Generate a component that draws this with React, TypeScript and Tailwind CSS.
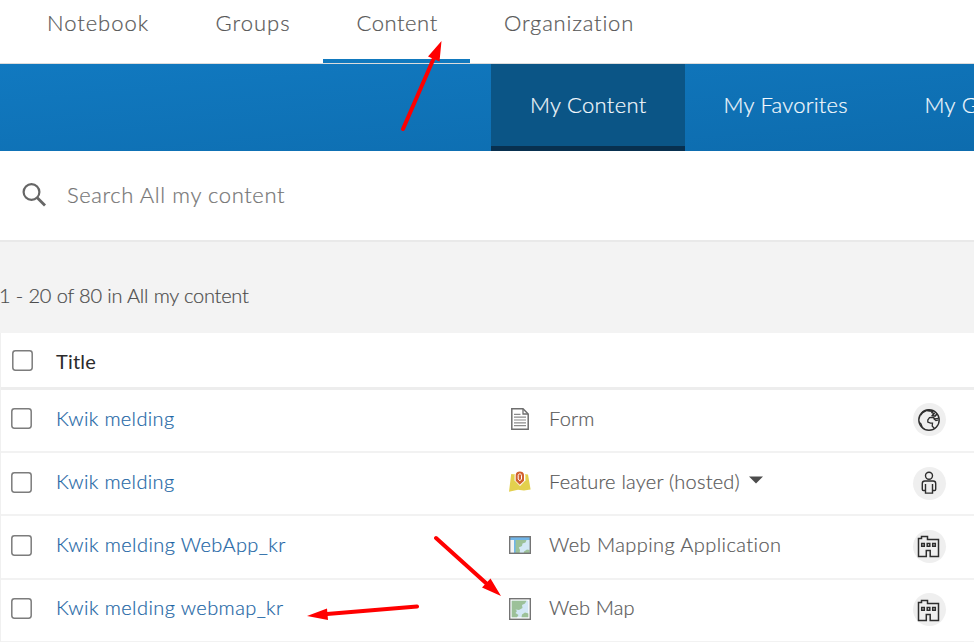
import React from "react";

function FormIcon() {
  return (
    <svg width="24" height="24" viewBox="0 0 24 24" fill="none">
      <path d="M3.8 1.8H15L20.2 7V22.2H3.8Z" fill="#fff" stroke="#6e6e6e" strokeWidth="1.5" />
      <path d="M15 2V7H20" stroke="#6e6e6e" strokeWidth="1.3" />
      <path d="M6 7.3H12.5M6 10.2H18M6 13H18M6 15.8H18M6 18.6H18" stroke="#8a8a8a" strokeWidth="1.2" />
    </svg>
  );
}

function LayerIcon() {
  return (
    <svg width="24" height="24" viewBox="0 0 24 24">
      <path d="M3.2 4L8 4.6L15 4L20 4.4L22.6 19.5L16 20.4L10 19.8L1 21.8Z" fill="#e3d04e" />
      <path d="M6.6 5.5C6.6 1 17.4 1 17.4 5.5V10.5L12 16L6.6 10.5Z" fill="#fff" />
      <path d="M7.7 5C7.7 .4 16 .4 16 5V10.7L11.8 14.7L7.7 10.7Z" fill="#d2602e" />
      <path d="M10.2 5.4C10.2 3.4 13.5 3.4 13.5 5.4V9L11.8 10.9L10.2 9Z" fill="#d2602e" stroke="#fff" strokeWidth="1" />
    </svg>
  );
}

function AppIcon() {
  return (
    <svg width="24" height="24" viewBox="0 0 24 24">
      <path d="M2 4H22V21H2Z" fill="#f4f4f4" />
      <path d="M7 7H22V21H7Z" fill="#d3e8f6" />
      <path d="M7 7H18.5L17.5 9.5L14.5 10.5L14 13L10.8 14.5L12 17L11.5 21H7Z" fill="#9cc199" />
      <path d="M15.5 21L16 18.5L19 16.5L21.5 17V21Z" fill="#9cc199" />
      <path d="M2 4H22V7H2Z" fill="#70b5e8" />
      <path d="M6 7H7.6V21H6Z" fill="#70b5e8" />
      <rect x="1.7" y="3.7" width="20.6" height="16.6" fill="none" stroke="#747474" strokeWidth="1.4" />
    </svg>
  );
}

function MapIcon() {
  return (
    <svg width="24" height="24" viewBox="0 0 24 24">
      <rect x="1.7" y="1.7" width="20.6" height="20.6" fill="#fff" stroke="#747474" strokeWidth="1.4" />
      <path d="M3.7 3.7H20.3V20.3H3.7Z" fill="#d3e8f6" />
      <path d="M3.7 3.7H18.5L17 6.5L14 8L14.5 11L11 13L7.5 12.5L9 14L7.5 16L10.5 18L9 20.3H3.7Z" fill="#9cc199" />
      <path d="M13.5 20.3L14 17.5L17 15.5L20.3 16.5V20.3Z" fill="#9cc199" />
    </svg>
  );
}

function GlobeIcon() {
  return (
    <svg width="24" height="24" viewBox="0 0 24 24" fill="none" stroke="#2e2e2e">
      <circle cx="12" cy="12" r="10.2" strokeWidth="1.4" />
      <path d="M5 3.8Q9 .8 13 1.8L15.5 4L12.5 3.8L9.5 3.2L6 5.3L3.3 8.8L2 12Z" fill="#2e2e2e" stroke="none" />
      <path d="M2 13L4.5 15.5L6 19.5L8.5 21.5L4 18.5Z" fill="#2e2e2e" stroke="none" />
      <path d="M15.5 2L15 4.5L17 5.5L15.5 7.5L18 8L20 6" strokeWidth="1.7" />
      <path d="M21.3 10.5L18 10.8L16 9.3L12.5 9.7L10.8 12V14L13.5 15.2H15.5L15.2 18L17 20.2" strokeWidth="1.3" />
      <path d="M16.5 10.5L19 12.5L21.5 12" strokeWidth="1.2" />
    </svg>
  );
}

function PersonIcon() {
  return (
    <svg width="24" height="24" viewBox="0 0 24 24" fill="none" stroke="#2e2e2e" strokeWidth="1.4">
      <circle cx="12" cy="4.8" r="3.5" />
      <path d="M8.3 19.5H6.3C5.6 19.5 5.3 19 5.3 18.3V12.5C5.3 10.8 6.4 10 7.8 10H16.2C17.6 10 18.7 10.8 18.7 12.5V18.3C18.7 19 18.4 19.5 17.7 19.5H15.7" />
      <path d="M8.5 13V22.1H15.5V13" />
    </svg>
  );
}

function BuildingIcon() {
  return (
    <svg width="24" height="24" viewBox="0 0 24 24" fill="none" stroke="#2e2e2e" strokeWidth="1.5">
      <path d="M9.3 22.5H1.5V4.5H4.5V2.5H10.5V5.5H21.5V22.5H13.2V16.5H9.3V22.5Z" />
      <path d="M4.7 9.5H7.3V12.3H4.7ZM10.2 9.5H12.8V12.3H10.2ZM15.7 9.5H18.3V12.3H15.7Z" />
    </svg>
  );
}

function Checkbox() {
  return (
    <svg className="block shrink-0" width="21" height="21" viewBox="0 0 21 21">
      <rect x="0.8" y="0.8" width="19.4" height="19.4" rx="2.6" fill="#fff" stroke="#7c7c7c" strokeWidth="1.5" />
    </svg>
  );
}

const rows = [
  { title: "Kwik melding", ts: "tracking-[0.35px]", type: "Form", ys: "tracking-[0.2px]", icon: <FormIcon />, share: <GlobeIcon />, shift: "mt-0", menu: false },
  { title: "Kwik melding", ts: "tracking-[0.35px]", type: "Feature layer (hosted)", ys: "tracking-[0.22px]", icon: <LayerIcon />, share: <PersonIcon />, shift: "mt-px", menu: true },
  { title: "Kwik melding WebApp_kr", ts: "tracking-[0.42px]", type: "Web Mapping Application", ys: "tracking-[0.43px]", icon: <AppIcon />, share: <BuildingIcon />, shift: "mt-px", menu: false },
  { title: "Kwik melding webmap_kr", ts: "tracking-[0.42px]", type: "Web Map", ys: "tracking-[0.15px]", icon: <MapIcon />, share: <BuildingIcon />, shift: "mt-px", menu: false },
];

export default function App() {
  return (
    <div className="relative h-[642px] w-[974px] overflow-hidden bg-white font-[Lato,'Open_Sans',sans-serif] font-light whitespace-nowrap [-webkit-text-stroke:0.2px]">
      <nav className="flex h-16 border-b border-[#dcdcdc] text-[22px] leading-[45px] text-[#595959]">
        <a className="ml-[47px] w-[168.5px] tracking-[0.95px]">Notebook</a>
        <a className="w-[107.5px] tracking-[1px]">Groups</a>
        <a className="h-[63px] w-[147px] border-b-4 border-[#1179be] pl-[33.5px] tracking-[0.55px]">Content</a>
        <a className="pl-[34px] tracking-[0.8px]">Organization</a>
      </nav>

      <div className="flex h-[87px] bg-linear-to-br from-[#1179c0] to-[#0d6cae] pl-[491px] text-[22px] leading-[82px] text-[#f4f9fd]">
        <div className="w-[194px] shrink-0 border-b-5 border-[#08304f] bg-[#0b5586] pl-[39px] tracking-[0.3px]">My Content</div>
        <div className="w-[201px] shrink-0 pl-[38.5px] tracking-[0.25px]">My Favorites</div>
        <div className="shrink-0 pl-[38.5px] tracking-[0.35px]">My Groups</div>
      </div>

      <div className="flex h-[91px] items-center border-b-2 border-[#e9e9e9] text-[22px] text-[#757575]">
        <svg className="ml-[21px] mr-5 -mt-0.5" width="26" height="26" viewBox="0 0 26 26" fill="none" stroke="#666">
          <circle cx="10.5" cy="10" r="7.9" strokeWidth="2.2" />
          <path d="M16 15.5L24 23.5" strokeWidth="2.8" />
        </svg>
        <span className="pb-0.5 tracking-[0.6px]">Search All my content</span>
      </div>

      <div className="h-[91px] bg-[#f3f3f3] pt-[41px] text-[20px] leading-[24px] text-[#4c4c4c]">
        <span className="-ml-px tracking-[-0.25px] [word-spacing:0.3px]">1 - 20 of 80 in All my content</span>
      </div>

      <div className="border-l border-[#f0f0f0]">
        <div className="flex h-[57px] items-center border-b-3 border-[#ededed] pl-[11px] text-[20px] font-normal text-[#2b2b2b] [-webkit-text-stroke:0]">
          <Checkbox />
          <span className="ml-[23px] pt-0.5 tracking-[0.2px]">Title</span>
        </div>
        {rows.map((r, i) => (
          <div key={i} className="flex h-[63.2px] items-center border-b-2 border-[#f2f2f2] pb-0.5 pl-2.5 text-[20px] text-[#595959]">
            <span className="-mt-0.5">
              <span className={`block ${r.shift}`}><Checkbox /></span>
            </span>
            <div className="ml-6 w-[451.5px] pb-1 text-[#1d66a5]">
              <span className={r.ts}>{r.title}</span>
            </div>
            <span className="-mt-0.5">
              <span className={`block ${r.shift}`}>{r.icon}</span>
            </span>
            <div className="ml-[17.5px] flex w-[363.5px] items-center gap-2.5 pb-1">
              <span className={r.ys}>{r.type}</span>
              {r.menu && (
                <svg width="14" height="8" viewBox="0 0 14 8" className="-ml-px -mt-px">
                  <path d="M0 .5H14L7 7.5Z" fill="#4c4c4c" />
                </svg>
              )}
            </div>
            <span className={`flex size-[33px] items-center justify-center rounded-full bg-[#efefef] ${r.shift}`}>{r.share}</span>
          </div>
        ))}
      </div>

      <svg className="absolute left-0 top-0" width="974" height="642" fill="#f00" stroke="#f00" strokeWidth="4" strokeLinecap="round">
        <path d="M403 129L433 60M436 538L487 584M417 606.5L327 614" />
        <path stroke="none" d="M441.500 41L428 56.500L439.500 61.500ZM501 596L490.500 578.500L482 587.500ZM307 616L327 608.500L328 620Z" />
      </svg>
    </div>
  );
}
